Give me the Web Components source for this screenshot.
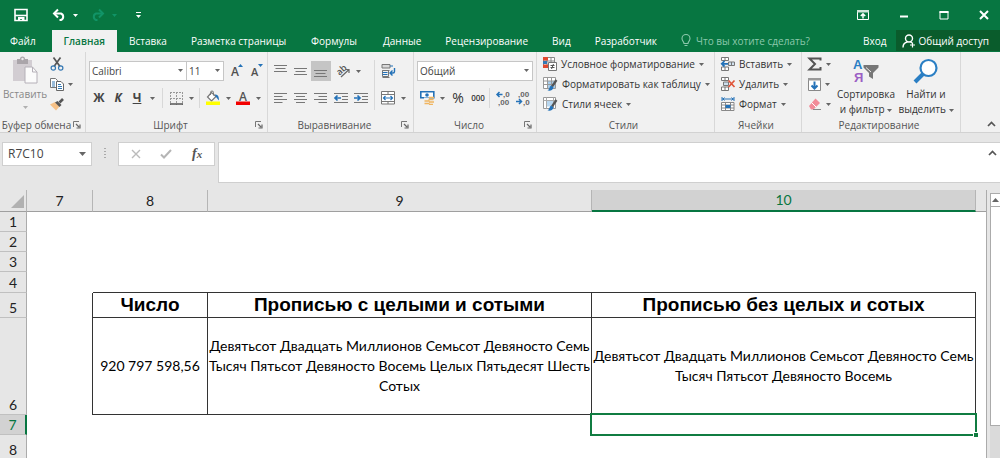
<!DOCTYPE html>
<html lang="ru">
<head>
<meta charset="utf-8">
<title>Excel</title>
<style>
html, body { margin: 0; height: 100%; overflow: hidden; }
body { font: 10px/14px "Open Sans", "Noto Sans", sans-serif; color: #333; background: #e6e6e6; }
</style>
</head>
<body>
<xl-app></xl-app>
<script>
const ICONS = {
  save: [14, 14, '<path d="M1 1.500h12v11H1z" fill="none" stroke="#fff" stroke-width="1.600"/><path d="M1 7.500h12" stroke="#fff" stroke-width="1.600"/><path d="M4 9h6.500v4H8v-2H6v2H4z" fill="#fff"/>'],
  undo: [14, 14, '<path d="M2.500 5.500H9a3.500 3.500 0 0 1 0 6.500H7.500" fill="none" stroke="#fff" stroke-width="2"/><path d="M6 1.500L2 5.500l4 4" fill="none" stroke="#fff" stroke-width="2"/>'],
  redo: [14, 14, '<path d="M11.500 5.500H5a3.500 3.500 0 0 0 0 6.500h1.500" fill="none" stroke="#119467" stroke-width="2"/><path d="M8 1.500l4 4-4 4" fill="none" stroke="#119467" stroke-width="2"/>'],
  custom: [7, 8, '<path d="M1 1.500h5" stroke="#fff"/><path d="M1 4h5L3.500 7z" fill="#fff"/>'],
  ribbonopts: [12, 10, '<path d="M.5.500h11v9H.5z" fill="none" stroke="#fff"/><path d="M0 0h12v2.500H0z" fill="#cfe5da"/><path d="M6 8.500V4M3.800 6L6 3.800 8.200 6" fill="none" stroke="#fff" stroke-width="1.500"/>'],
  min: [10, 10, '<path d="M1 6.500h8" stroke="#fff" stroke-width="2"/>'],
  max: [10, 10, '<path d="M1 1.500h8v7.500H1z" fill="none" stroke="#fff"/><path d="M.5 2h9" stroke="#fff" stroke-width="2"/>'],
  close: [10, 10, '<path d="M1 1l8 8M9 1L1 9" stroke="#fff" stroke-width="2"/>'],
  bulb: [10, 13, '<path d="M3 9.500C3 7.500 1 7 1 4.500a4 4 0 0 1 8 0c0 2.500-2 3-2 5zM3.500 11.500h3" fill="none" stroke="#8cc8ac" stroke-width="1.100"/>'],
  person: [14, 14, '<circle cx="7" cy="4.500" r="3.500" fill="none" stroke="#fff" stroke-width="1.400"/><path d="M1 13.500c0-3 2-5 4.500-5.500M8.500 8l1.500 1" fill="none" stroke="#fff" stroke-width="1.400"/><path d="M10.500 8.500v5M8 11h5" stroke="#fff" stroke-width="1.200"/>'],
  paste: [26, 28, '<path d="M1 4h19v21H1z" fill="#d2cdd2"/><path d="M5 5V3h3a2.500 2.500 0 0 1 5 0h3v5H5z" fill="#aaa5aa"/><circle cx="10.500" cy="3" r="1.200" fill="#eee"/><path d="M13 11h7.500l4.500 5v11H13z" fill="#fbfbfb" stroke="#b5b0b8"/><path d="M20.500 11v5H25" fill="none" stroke="#b5b0b8"/>'],
  cut: [14, 14, '<path d="M3.500.500l6.500 9M10.500.500L4 9.500" stroke="#555" stroke-width="1.700"/><circle cx="3.300" cy="11" r="2.200" fill="none" stroke="#3579b4" stroke-width="1.200"/><circle cx="10.700" cy="11" r="2.200" fill="none" stroke="#3579b4" stroke-width="1.200"/>'],
  copy: [14, 14, '<path d="M.5 1.500h5l2 2v7h-7z" fill="#fff" stroke="#777"/><path d="M2 5h3M2 7h3M2 9h3" stroke="#3579b4"/><path d="M6.500 4.500h4.500l2.500 2.500v6.500h-7z" fill="#fff" stroke="#666"/><path d="M8 7.500h3M8 9.500h4M8 11.500h4" stroke="#3579b4"/>'],
  brush: [14, 14, '<path d="M0 7.500L5 5l4.500 4.500L6 13.500z" fill="#f7c288"/><path d="M5 5.500L7.500 4l4 4-2 2z" fill="#555"/><path d="M9.500 5.500L13 2" stroke="#555" stroke-width="2.600"/>'],
  grow: [12, 16, '<text x="0" y="12.500" font-size="12" font-weight="600" fill="#505050">A</text><path d="M7 4L9.500 1 12 4z" fill="#2472b8"/>'],
  shrink: [12, 16, '<text x="0" y="12.500" font-size="11" font-weight="600" fill="#505050">A</text><path d="M7 1L9.500 4 12 1z" fill="#2472b8"/>'],
  borders: [13, 13, '<path d="M.5 0v13M6.500 0v13M12.500 0v13M0 .5h13M0 6.500h13" stroke="#999" stroke-dasharray="2 1"/><path d="M0 12h13" stroke="#555" stroke-width="1.500"/>'],
  fill: [14, 14, '<path d="M5.500 1.500L1.500 6l4 4L10 5.500z" fill="#fff" stroke="#777" stroke-width="1.200"/><path d="M4.500 4V1.500a1.500 1.500 0 0 1 3 0v3" fill="none" stroke="#777"/><path d="M9 3.500c3 0 4 2 4 6-1.500-1-2-3-3.500-4z" fill="#2472b8"/><path d="M0 10.500h14v3.500H0z" fill="#ff0"/>'],
  fontcolor: [14, 18, '<text x="3" y="11.500" font-size="12" font-weight="600" fill="#555">A</text><path d="M0 12.500h14v3.500H0z" fill="#f20000"/>'],
  atop: [14, 14, '<path d="M0 1.500h13M1.500 4.500h10M0 7.500h13" stroke="#777"/>'],
  amid: [14, 14, '<path d="M0 4.500h13M1.500 7.500h10M0 10.500h13" stroke="#777"/>'],
  abot: [14, 14, '<path d="M0 6.500h13M1.500 9.500h10M0 12.500h13" stroke="#777"/>'],
  orient: [18, 18, '<text x="3" y="12.500" font-size="9" font-weight="600" fill="#555" transform="rotate(-42 6 10)">ab</text><path d="M7 15L15 7.500M11.500 7.500H15V11" fill="none" stroke="#666" stroke-width="1.200"/>'],
  wrap: [15, 14, '<path d="M1 .5h8v3.500H1z" fill="#d8d8d8" stroke="#777"/><path d="M1.500 6.500h7M1.500 13.500h7" stroke="#777"/><path d="M1.500 6.500h6v6h-6z" fill="none" stroke="#777"/><path d="M1.500 8.500h5M1.500 10.500h5M9 2h3" stroke="#2472b8"/><path d="M13.500 4v3.500a1.500 1.500 0 0 1-1.500 1.500H9.500M11.500 6.500L9 9l2.500 2.500" fill="none" stroke="#2472b8" stroke-width="1.400"/>'],
  left: [14, 13, '<path d="M0 1.500h13M0 4.500h8.500M0 7.500h13M0 10.500h8.500" stroke="#777"/>'],
  center: [14, 13, '<path d="M0 1.500h13M2 4.500h9M0 7.500h13M2 10.500h9" stroke="#777"/>'],
  right: [14, 13, '<path d="M0 1.500h13M4.500 4.500H13M0 7.500h13M4.500 10.500H13" stroke="#777"/>'],
  outdent: [15, 13, '<path d="M0 1.500h14M8 4.500h6M8 7.500h6M0 10.500h14" stroke="#777"/><path d="M7 6H1.500M3.500 3.500L1 6l2.500 2.500" fill="none" stroke="#2472b8" stroke-width="1.700"/>'],
  indent: [15, 13, '<path d="M0 1.500h14M8 4.500h6M8 7.500h6M0 10.500h14" stroke="#777"/><path d="M0 6h5.500M3.500 3.500L6 6 3.500 8.500" fill="none" stroke="#2472b8" stroke-width="1.700"/>'],
  merge: [14, 14, '<path d="M.5.500h13v12.500H.5zM0 3.500h14M0 10.500h14M7 .5v3M7 10.500V13" fill="#fff" stroke="#777"/><path d="M2.500 7h9M4.500 5L2.500 7l2 2M9.500 5l2 2-2 2" fill="none" stroke="#2472b8" stroke-width="1.200"/>'],
  money: [15, 14, '<path d="M.8.800h13v6H.8z" fill="#fff" stroke="#2472b8" stroke-width="1.600"/><circle cx="7" cy="4" r="1.800" fill="#2472b8"/><path d="M4 8h5M3 10.500h5" stroke="#f1f1f1" stroke-width="3"/><path d="M9 6.500h5M8.500 8.500h5M4.500 10h5M9 11h5M4.500 12.500h5M9 13.300h4" stroke="#f0b560" stroke-width="1.300"/>'],
  incdec: [14, 16, '<g font-family="Liberation Sans, sans-serif" font-size="8" font-weight="700" fill="#666"><text x="7" y="7">,0</text><text x="2" y="15">,00</text></g><path d="M6.500 4.500H1.500M3.500 2L1 4.500 3.500 7" fill="none" stroke="#2472b8" stroke-width="1.500"/>'],
  decdec: [14, 16, '<g font-family="Liberation Sans, sans-serif" font-size="8" font-weight="700" fill="#666"><text x="2" y="7">,00</text><text x="7" y="15">,0</text></g><path d="M0 11.500h5M3 9l2.500 2.500L3 14" fill="none" stroke="#2472b8" stroke-width="1.500"/>'],
  cond: [14, 14, '<path d="M.5.500h11v10H.5zM.5 4h11M4 .5v10M8 .5v10" fill="#fff" stroke="#888"/><path d="M0 0h5v3.500H0z" fill="#e0492f"/><path d="M0 4h4v3H0z" fill="#3579b4"/><path d="M0 7.500h5v3.500H0z" fill="#e0492f"/><path d="M5.500 5.500h8v8h-8z" fill="#fff" stroke="#777"/><path d="M7.500 8.500h4M7.500 10.500h4M10.500 7l-2 5" stroke="#555"/>'],
  astable: [15, 14, '<path d="M.5.500h12v11H.5z" fill="#fff" stroke="#999"/><path d="M4 4h8v7H4z" fill="#a9cdea"/><path d="M.5 4h12M.5 7.500h12M4.500.5v11M8.500.5v11" stroke="#999"/><path d="M13.500 3L9 9.500" stroke="#555" stroke-width="2.200"/><path d="M8 8.500l2.500 2c-1 3-3 3.500-6 3 2-1 2-4 3.500-5z" fill="#2472b8"/>'],
  styles: [15, 14, '<path d="M.5.500h12v11H.5z" fill="#fff" stroke="#999"/><path d="M3 3.500h7v6H3z" fill="#b9d7ef"/><path d="M.5 3.500h12M3.500.5v11M10.500.5v11" stroke="#aaa"/><path d="M13.500 3L9 9.500" stroke="#555" stroke-width="2.200"/><path d="M8 8.500l2.500 2c-1 3-3 3.500-6 3 2-1 2-4 3.500-5z" fill="#2472b8"/>'],
  insert: [14, 14, '<path d="M.5.500h7v3h-7zM.5 10h7v3.500h-7zM4 .5v3M4 10v3.500" fill="#fff" stroke="#777"/><path d="M7.500 5h6v3.500h-6zM10.500 5v3.500" fill="#cfe0ee" stroke="#777"/><path d="M7 6.800H1.500M3.500 4L.8 6.800l2.700 2.700" fill="none" stroke="#2472b8" stroke-width="1.800"/>'],
  remove: [14, 14, '<path d="M.5.500h7v3h-7zM.5 10h7v3.500h-7zM4 .5v3M4 10v3.500" fill="#fff" stroke="#777"/><path d="M2.500 5h5v3.500h-5z" fill="#cfe0ee" stroke="#777"/><path d="M7.500 3.500l6 6.500M13.500 3.500l-6 6.500" stroke="#e0553a" stroke-width="1.700"/>'],
  format: [14, 14, '<path d="M1 2h12M1 0v4M13 0v4M3.500 .5L2 2l1.500 1.500M10.500.5L12 2l-1.500 1.500" fill="none" stroke="#2472b8"/><path d="M.5 5.500h12.500v8H.5zM.5 8h12.500M.5 11h12.500M4.500 5.500v8M9.500 5.500v8" fill="#fff" stroke="#888"/><path d="M4.500 8h5v3h-5z" fill="#2472b8"/>'],
  sum: [14, 14, '<path d="M12.500 3.500V1.500H1.500L7 7l-5.500 5.500h11v-2.500" fill="none" stroke="#555" stroke-width="2"/>'],
  filldown: [13, 13, '<path d="M.5.500h12v12H.5z" fill="#fff" stroke="#888"/><path d="M0 0h13v2.500H0z" fill="#999"/><path d="M6.500 3.500V10M3.500 7.500l3 3 3-3" fill="none" stroke="#2472b8" stroke-width="2"/>'],
  erase: [14, 14, '<path d="M7.500 1.500l4.500 4.500-6.500 6.500H3L1 9z" fill="#f28a98"/><path d="M3.500 5.500L8 10" stroke="#fff"/><path d="M5 12.500h8" stroke="#888"/>'],
  sort: [26, 26, '<g font-family="Liberation Sans, sans-serif" font-size="13" font-weight="700"><text x="0" y="11" fill="#2b7fc4">А</text><text x="1" y="24" fill="#9b5fc4">Я</text></g><path d="M10.500 7h15v2.500L20 15v6l-4-2.500V15l-5.500-5.500z" fill="#777"/><path d="M13 9.500l5 4.500" stroke="#eee"/>'],
  find: [26, 26, '<path d="M10 16L2 24" stroke="#2b7fc4" stroke-width="4"/><circle cx="15.500" cy="10" r="8" fill="#fff" stroke="#2b7fc4" stroke-width="2.200"/>'],
  collapse: [9, 6, '<path d="M1 5l3.500-3.500L8 5" fill="none" stroke="#555" stroke-width="1.700"/>'],
  launcher: [8, 8, '<path d="M.5 6V.5H6" fill="none" stroke="#777"/><path d="M3 3l3 3M7 3.500V7H3.500" fill="none" stroke="#666" stroke-width="1.200"/>'],
  caret: [5, 3, '<path d="M0 0h5L2.500 3z" fill="#666"/>'],
  wcaret: [5, 3, '<path d="M0 0h5L2.500 3z" fill="#fff"/>'],
  gcaret: [5, 3, '<path d="M0 0h5L2.500 3z" fill="#119467"/>'],
  lcaret: [5, 3, '<path d="M0 0h5L2.500 3z" fill="#b0b0b0"/>'],
  bigcaret: [7, 4, '<path d="M0 0h7L3.500 4z" fill="#666"/>'],
  up: [7, 4, '<path d="M0 4h7L3.500 0z" fill="#666"/>'],
  cross: [10, 10, '<path d="M1 1l8 8M9 1L1 9" stroke="#bbb" stroke-width="1.400"/>'],
  check: [12, 10, '<path d="M1 5.500l3 3L11 1" fill="none" stroke="#b5b5b5" stroke-width="2"/>'],
  dots: [2, 10, '<path d="M1 0v10" stroke="#aaa" stroke-width="2" stroke-dasharray="1 2"/>'],
  corner: [13, 13, '<path d="M13 0v13H0z" fill="#b1b1b1"/>']
};

const define = (name, html, setup) => {
  const tpl = document.createElement('template');
  tpl.innerHTML = html;
  customElements.define(name, class extends HTMLElement {
    connectedCallback() {
      if (this.shadowRoot) return;
      this.attachShadow({ mode: 'open' }).append(tpl.content.cloneNode(true));
      if (setup) setup(this, this.shadowRoot);
    }
  });
};

define('xl-icon', '<style>:host{display:inline-flex;flex:none}svg{display:block;overflow:visible}</style>', (el, root) => {
  const [w, h, body] = ICONS[el.getAttribute('name')];
  root.innerHTML += `<svg width="${w}" height="${h}" viewBox="0 0 ${w} ${h}" aria-hidden="true">${body}</svg>`;
});

/* Push button: icon and/or slotted caption, optional drop-down arrow. */
define('xl-tool', `<style>
:host { display: inline-flex; flex: none; width: var(--w, auto); height: var(--h, 20px); }
button { font: inherit; color: inherit; background: none; border: 0; padding: 0; margin: 0; flex: 1;
  display: flex; align-items: center; justify-content: center; white-space: nowrap; }
:host([row]) button { justify-content: flex-start; gap: 4px; }
:host([pressed]) button { background: #c5c5c5; }
:host([stack]) button { flex-direction: column; justify-content: flex-start; gap: 3px; }
</style><button type="button"><slot></slot></button>`, (el, root) => {
  const b = root.querySelector('button'), icon = el.getAttribute('icon');
  if (el.title) b.setAttribute('aria-label', el.title);
  if (icon) b.insertAdjacentHTML('afterbegin', `<xl-icon name="${icon}"></xl-icon>`);
  if (el.hasAttribute('caret')) b.insertAdjacentHTML('beforeend', `<xl-icon name="caret"></xl-icon>`);
});

define('xl-select', `<style>
:host { display: flex; position: relative; width: var(--w); height: 20px; flex: none; }
select { appearance: none; font: inherit; color: #444; background: #fff; border: 1px solid #c6c6c6; border-radius: 0;
  width: 100%; margin: 0; padding: 0 2px; }
xl-icon { position: absolute; right: 4px; top: 8px; pointer-events: none; }
</style><select></select><xl-icon name="caret"></xl-icon>`, (el, root) => {
  const s = root.querySelector('select');
  s.setAttribute('aria-label', el.title);
  s.add(new Option(el.getAttribute('value')));
});

define('xl-group', `<style>
:host { display: flex; flex-direction: column; flex: none; box-sizing: border-box; width: var(--group-w); height: 80px;
  border-right: 1px solid #d8d8d8; }
.body { flex: 1; display: flex; min-height: 0; }
footer { display: flex; height: 15px; align-items: center; color: #555; padding-right: 4px; }
span { flex: 1; text-align: center; white-space: nowrap; }
button { border: 0; padding: 0; background: none; display: flex; }
</style><div class="body"><slot></slot></div><footer><span></span></footer>`, (el, root) => {
  root.querySelector('span').textContent = el.getAttribute('label');
  if (el.hasAttribute('launcher'))
    root.querySelector('footer').insertAdjacentHTML('beforeend', '<button type="button" aria-label="Параметры"><xl-icon name="launcher"></xl-icon></button>');
});

define('xl-titlebar', `<style>
:host { display: flex; align-items: center; height: 30px; padding: 0 11px 0 14px; background: #077641; }
.sp { flex: 1; }
</style>
<xl-tool icon="save" title="Сохранить" style="--w:14px"></xl-tool>
<xl-tool icon="undo" title="Отменить" style="--w:14px;margin-left:24px"></xl-tool>
<xl-tool icon="wcaret" title="Список отмены" style="--w:12px;margin-left:3px"></xl-tool>
<xl-tool icon="redo" title="Вернуть" style="--w:14px;margin-left:10px"></xl-tool>
<xl-tool icon="gcaret" title="Список возврата" style="--w:12px;margin-left:3px"></xl-tool>
<xl-tool icon="custom" title="Настройка панели" style="--w:12px;margin-left:12px"></xl-tool>
<div class="sp"></div>
<xl-tool icon="ribbonopts" title="Параметры ленты" style="--w:12px"></xl-tool>
<xl-tool icon="min" title="Свернуть" style="--w:10px;margin-left:30px"></xl-tool>
<xl-tool icon="max" title="Развернуть" style="--w:10px;margin-left:30px"></xl-tool>
<xl-tool icon="close" title="Закрыть" style="--w:10px;margin-left:30px"></xl-tool>`);

define('xl-tabs', `<style>
:host { display: flex; height: 22px; background: #077641; color: #fff; box-sizing: border-box; border-bottom: 1px solid #077641; }
nav { display: flex; flex: none; }
a { color: inherit; text-decoration: none; padding: 0 12px; line-height: 22px; white-space: nowrap; }
a.file { padding: 0 16px 0 10px; }
a.on { background: #f1f1f1; color: #077641; font-weight: 600; height: 22px; }
a.wide { padding: 0 14px 0 13px; }
a.login { padding: 0 9px 0 0; }
.tell { display: flex; align-items: center; gap: 5px; flex: 1; margin-left: 12px; min-width: 0; }
input { font: inherit; color: #8cc8ac; background: none; border: 0; padding: 0; flex: 1; min-width: 0; outline: 0; }
input::placeholder { color: #8cc8ac; opacity: 1; }
a.share { display: flex; align-items: center; gap: 3px; background: #0a5c2c; padding: 0 11px 0 6px; }
</style>
<nav><a class="file" href="#">Файл</a><a class="on" href="#">Главная</a><a href="#">Вставка</a><a href="#">Разметка страницы</a><a class="wide" href="#">Формулы</a><a href="#">Данные</a><a href="#">Рецензирование</a><a href="#">Вид</a><a href="#">Разработчик</a></nav>
<label class="tell"><xl-icon name="bulb"></xl-icon><input aria-label="Что вы хотите сделать?" placeholder="Что вы хотите сделать?"></label>
<a href="#" class="login">Вход</a><a href="#" class="share"><xl-icon name="person"></xl-icon>Общий доступ</a>`);

define('xl-ribbon', `<style>
:host { display: flex; height: 80px; background: #f1f1f1; border-bottom: 1px solid #d2d2d2; }
.rows { display: flex; flex-direction: column; gap: 7px; padding-top: 9px; }
.row { display: flex; align-items: center; height: 20px; }
.list { display: flex; flex-direction: column; padding-top: 2px; }
.sep { width: 1px; height: 20px; background: #d8d8d8; flex: none; }
.off { color: #888; }
xl-tool > b, xl-tool > i, xl-tool > u { font-size: 12px; font-weight: 700; color: #444; }
.two { line-height: 15px; text-align: center; }
.end { flex: 1; display: flex; align-items: flex-end; justify-content: flex-end; padding: 0 4px 4px 0; }
.end xl-tool { --h: 8px; --w: 9px; }
</style>
<xl-group label="Буфер обмена" launcher style="--group-w:86px">
  <xl-tool stack class="off" icon="paste" style="--w:50px;--h:60px;padding-top:4px">Вставить<xl-icon name="lcaret" style="margin-top:2px"></xl-icon></xl-tool>
  <div class="list">
    <xl-tool row icon="cut" title="Вырезать"></xl-tool>
    <xl-tool row icon="copy" caret title="Копировать"></xl-tool>
    <xl-tool row icon="brush" title="Формат по образцу"></xl-tool>
  </div>
</xl-group>
<xl-group label="Шрифт" launcher style="--group-w:182px">
  <div class="rows" style="padding-left:3px">
    <div class="row"><xl-select title="Шрифт" value="Calibri" style="--w:98px"></xl-select><xl-select title="Размер" value="11" style="--w:38px;margin-left:-1px"></xl-select>
      <xl-tool icon="grow" title="Увеличить" style="--w:20px;margin-left:3px"></xl-tool><xl-tool icon="shrink" title="Уменьшить" style="--w:20px"></xl-tool></div>
    <div class="row"><xl-tool style="--w:20px"><b>Ж</b></xl-tool><xl-tool style="--w:18px"><i>К</i></xl-tool><xl-tool style="--w:20px"><u>Ч</u></xl-tool><xl-tool caret title="Подчёркивание" style="--w:10px"></xl-tool>
      <i class="sep" style="margin:0 3px 0 5px"></i><xl-tool icon="borders" title="Границы" style="--w:20px"></xl-tool><xl-tool caret title="Выбор границ" style="--w:10px"></xl-tool>
      <i class="sep" style="margin:0 3px"></i><xl-tool icon="fill" title="Заливка" style="--w:20px"></xl-tool><xl-tool caret title="Цвет заливки" style="--w:10px"></xl-tool><xl-tool icon="fontcolor" title="Цвет шрифта" style="--w:20px"></xl-tool><xl-tool caret title="Выбор цвета" style="--w:10px"></xl-tool></div>
  </div>
</xl-group>
<xl-group label="Выравнивание" launcher style="--group-w:146px">
  <div class="rows" style="padding-left:3px">
    <div class="row"><xl-tool icon="atop" title="По верхнему краю" style="--w:20px"></xl-tool><xl-tool icon="amid" title="Посередине" style="--w:20px"></xl-tool><xl-tool pressed icon="abot" title="По нижнему краю" style="--w:20px"></xl-tool><xl-tool icon="orient" title="Ориентация" style="--w:20px;margin-left:2px"></xl-tool><xl-tool caret title="Угол" style="--w:10px"></xl-tool></div>
    <div class="row"><xl-tool icon="left" title="По левому краю" style="--w:20px"></xl-tool><xl-tool icon="center" title="По центру" style="--w:20px"></xl-tool><xl-tool icon="right" title="По правому краю" style="--w:20px"></xl-tool><xl-tool icon="outdent" title="Уменьшить отступ" style="--w:20px"></xl-tool><xl-tool icon="indent" title="Увеличить отступ" style="--w:20px"></xl-tool></div>
  </div>
  <i class="sep" style="height:50px;margin:8px 3px 0"></i>
  <div class="rows">
    <div class="row"><xl-tool icon="wrap" title="Перенести текст" style="--w:20px"></xl-tool></div>
    <div class="row"><xl-tool icon="merge" title="Объединить" style="--w:20px"></xl-tool><xl-tool caret title="Варианты" style="--w:10px"></xl-tool></div>
  </div>
</xl-group>
<xl-group label="Число" launcher style="--group-w:123px">
  <div class="rows" style="padding-left:3px">
    <div class="row"><xl-select title="Числовой формат" value="Общий" style="--w:116px"></xl-select></div>
    <div class="row"><xl-tool icon="money" title="Финансовый" style="--w:20px"></xl-tool><xl-tool caret title="Валюта" style="--w:10px"></xl-tool><xl-tool style="--w:22px;font-size:14px">%</xl-tool><xl-tool style="--w:18px;font-size:8px;font-weight:600">000</xl-tool>
      <i class="sep" style="margin:0 3px 0 2px"></i><xl-tool icon="incdec" title="Увеличить разрядность" style="--w:20px"></xl-tool><xl-tool icon="decdec" title="Уменьшить разрядность" style="--w:20px"></xl-tool></div>
  </div>
</xl-group>
<xl-group label="Стили" style="--group-w:178px">
  <div class="list" style="padding-left:6px">
    <xl-tool row icon="cond" caret>Условное форматирование</xl-tool>
    <xl-tool row icon="astable" caret>Форматировать как таблицу</xl-tool>
    <xl-tool row icon="styles" caret>Стили ячеек</xl-tool>
  </div>
</xl-group>
<xl-group label="Ячейки" style="--group-w:87px">
  <div class="list" style="padding-left:6px">
    <xl-tool row icon="insert" caret>Вставить</xl-tool>
    <xl-tool row icon="remove" caret>Удалить</xl-tool>
    <xl-tool row icon="format" caret>Формат</xl-tool>
  </div>
</xl-group>
<xl-group label="Редактирование" style="--group-w:159px">
  <div class="list" style="padding-left:6px">
    <xl-tool row icon="sum" caret title="Сумма"></xl-tool>
    <xl-tool row icon="filldown" caret title="Заполнить"></xl-tool>
    <xl-tool row icon="erase" caret title="Очистить"></xl-tool>
  </div>
  <xl-tool stack icon="sort" style="--w:62px;--h:60px;padding-top:6px;margin-left:4px"><span class="two">Сортировка<br>и фильтр <xl-icon name="caret" style="vertical-align:middle"></xl-icon></span></xl-tool>
  <xl-tool stack icon="find" style="--w:58px;--h:60px;padding-top:6px"><span class="two">Найти и<br>выделить <xl-icon name="caret" style="vertical-align:middle"></xl-icon></span></xl-tool>
</xl-group>
<div class="end"><xl-tool icon="collapse" title="Свернуть ленту"></xl-tool></div>`);

define('xl-formula-bar', `<style>
:host { display: flex; align-items: flex-start; height: 49px; padding: 9px 0 0 2px; box-sizing: border-box; }
.box { display: flex; align-items: center; height: 24px; box-sizing: border-box; background: #fff; border: 1px solid #cfcfcf; }
.name { width: 90px; padding: 0 5px; }
input { font: 12px/16px "Open Sans", "Noto Sans", sans-serif; color: #444; border: 0; padding: 0; flex: 1; min-width: 0; }
.dots { margin: 6px 12px 0; }
.fx { width: 97px; justify-content: space-around; padding: 0 2px; }
.fx b { font: italic bold 14px/16px "Liberation Serif", serif; color: #555; }
.fx small { font-size: 11px; }
.text { flex: 1; display: flex; height: 41px; margin-left: 3px; box-sizing: border-box; background: #fff; border: 1px solid #cfcfcf; border-right: 0; padding: 7px 3px 0 0; }
textarea { flex: 1; border: 0; padding: 0; resize: none; outline: 0; height: 28px; }
</style>
<div class="box name"><input aria-label="Имя" value="R7C10"><xl-icon name="bigcaret"></xl-icon></div>
<xl-icon class="dots" name="dots"></xl-icon>
<div class="box fx"><xl-tool icon="cross" title="Отмена"></xl-tool><xl-tool icon="check" title="Ввод"></xl-tool><xl-tool title="Вставить функцию"><b>f<small>x</small></b></xl-tool></div>
<div class="text"><textarea aria-label="Строка формул"></textarea><xl-icon name="collapse"></xl-icon></div>`);

define('xl-sheet', `<style>
:host { display: block; flex: 1; min-width: 0; overflow: hidden; }
table { width: 100%; border-collapse: separate; border-spacing: 0; table-layout: fixed; background: #fff;
  font: 14px/20px "Lato", "Open Sans", sans-serif; color: #000; border-right: 1px solid #ababab; }
th, td { box-sizing: border-box; padding: 0; text-align: center; font-weight: 400; white-space: nowrap; }
thead th { height: 22px; background: #e6e6e6; border-right: 1px solid #b5b5b5; border-bottom: 1px solid #9f9f9f; color: #222; }
thead th:last-child { border-right: 0; }
thead th.on { background: #d2d2d2; border-bottom: 2px solid #077641; color: #077641; }
thead th.all { text-align: right; line-height: 0; padding: 2px 2px 0 0; }
tbody th { height: var(--h, 20px); background: #e6e6e6; border-right: 1px solid #ababab; border-bottom: 1px solid #c0c0c0; color: #222; vertical-align: bottom; line-height: 18px; }
tbody th.on { background: #d2d2d2; color: #077641; border-right: 2px solid #077641; }
td.c { border-right: 1px solid #333; border-bottom: 1px solid #333; }
td.l { border-right: 1px solid #333; }
td.t { border-bottom: 1px solid #333; }
td.h { font: bold 19px/20px "Liberation Sans", sans-serif; }
td.sel { position: relative; }
.cursor { position: absolute; inset: -2px -1px -1px -2px; border: 2px solid #107c41; }
.cursor::after { content: ""; position: absolute; right: -3px; bottom: -3px; width: 4px; height: 4px; background: #107c41; border: 1px solid #fff; border-width: 1px 0 0 1px; }
</style>
<table>
<colgroup><col style="width:27px"><col style="width:66px"><col style="width:115px"><col><col><col style="width:10px"></colgroup>
<thead><tr><th class="all"><xl-icon name="corner"></xl-icon></th><th>7</th><th>8</th><th>9</th><th class="on">10</th><th></th></tr></thead>
<tbody>
<tr><th>1</th><td></td><td></td><td></td><td></td><td></td></tr>
<tr><th>2</th><td></td><td></td><td></td><td></td><td></td></tr>
<tr><th>3</th><td></td><td></td><td></td><td></td><td></td></tr>
<tr style="--h:21px"><th>4</th><td></td><td class="t"></td><td class="t"></td><td class="t"></td><td></td></tr>
<tr style="--h:25px"><th>5</th><td class="l"></td><td class="c h">Число</td><td class="c h">Прописью с целыми и сотыми</td><td class="c h">Прописью без целых и сотых</td><td></td></tr>
<tr style="--h:97px"><th>6</th><td class="l"></td><td class="c">920 797 598,56</td><td class="c">Девятьсот Двадцать Миллионов Семьсот Девяносто Семь<br>Тысяч Пятьсот Девяносто Восемь Целых Пятьдесят Шесть<br>Сотых</td><td class="c">Девятьсот Двадцать Миллионов Семьсот Девяносто Семь<br>Тысяч Пятьсот Девяносто Восемь</td><td></td></tr>
<tr><th class="on">7</th><td></td><td></td><td></td><td class="sel"><div class="cursor"></div></td><td></td></tr>
<tr style="--h:25px"><th>8</th><td></td><td></td><td></td><td></td><td></td></tr>
</tbody></table>`);

define('xl-scrollbar', `<style>
:host { display: flex; flex-direction: column; width: 10px; flex: none; margin: 3px 0 0 3px; background: #dadada; box-sizing: border-box; }
xl-tool { --h: 14px; background: #fff; border: 1px solid #ababab; border-right: 0; box-sizing: border-box; }
.thumb { background: #fff; border: 1px solid #ababab; border-width: 0 0 1px 1px; flex: 0 1 218px; }
</style><xl-tool icon="up" title="Вверх"></xl-tool><div class="thumb"></div>`);

define('xl-app', `<style>
:host { display: flex; flex-direction: column; height: 100vh; overflow: hidden; background: #e6e6e6; }
main { display: flex; flex: 1; min-height: 0; margin-top: 8px; }
xl-titlebar, xl-tabs, xl-ribbon, xl-formula-bar { flex: none; }
</style>
<xl-titlebar></xl-titlebar><xl-tabs></xl-tabs><xl-ribbon></xl-ribbon><xl-formula-bar></xl-formula-bar>
<main><xl-sheet></xl-sheet><xl-scrollbar></xl-scrollbar></main>`);
</script>
</body>
</html>
